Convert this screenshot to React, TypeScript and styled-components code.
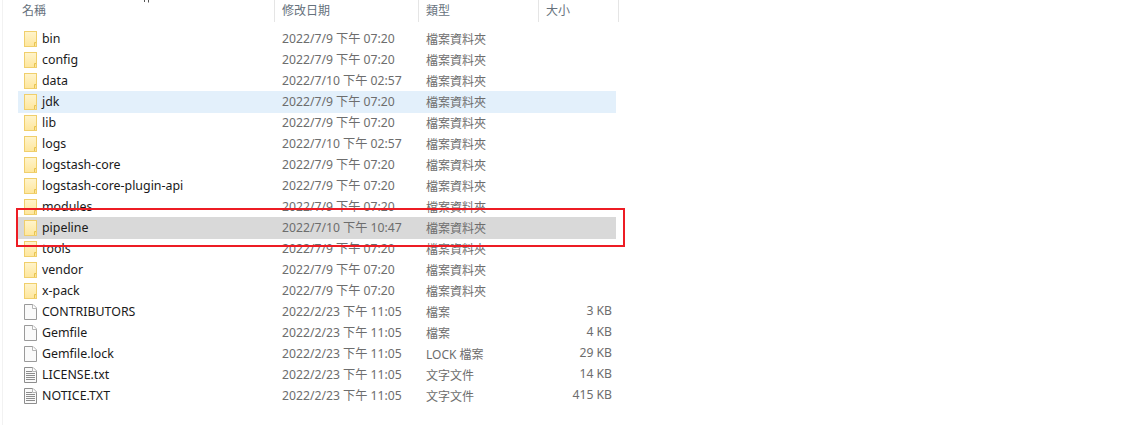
import React from "react";
import styled, { createGlobalStyle } from "styled-components";

const Global = createGlobalStyle`
  html, body { margin: 0; padding: 0; background: #fff; }
  body { font-family: "Noto Sans", "Noto Sans CJK TC", sans-serif; overflow: hidden; }
`;

const Page = styled.div`
  position: relative;
  width: 1127px;
  height: 425px;
  box-sizing: border-box;
  padding-left: 18px;
  overflow: hidden;
  &::before {
    content: "";
    position: absolute;
    left: 2px;
    top: 0;
    bottom: 0;
    width: 1px;
    background: #f2f2f2;
  }
`;

const ClippedMark = styled.svg`
  position: absolute;
  left: 143px;
  top: 0;
  display: block;
`;

const Header = styled.div`
  display: grid;
  grid-template-columns: 257px 144px 120px 80px;
  width: 601px;
  height: 22px;
  margin-bottom: 6px;
`;

const HeaderCell = styled.div<{ $pad: number }>`
  box-sizing: border-box;
  height: 22px;
  padding-left: ${(p) => p.$pad}px;
  border-right: 1px solid #e5e5e5;
  font: 12px/19px "Noto Sans CJK TC", sans-serif;
  color: #66717c;
`;

const List = styled.div`
  width: 598px;
  display: flex;
  flex-direction: column;
`;

const rowBg: Record<string, string> = { none: "transparent", hover: "#e3f0fb", selected: "#d9d9d9" };

const Row = styled.div<{ $state: string }>`
  display: grid;
  grid-template-columns: 257px 144px 120px 77px;
  align-items: center;
  height: 21px;
  background: ${(p) => rowBg[p.$state]};
  box-shadow: ${(p) => (p.$state === "none" ? "none" : `0 1px 0 ${rowBg[p.$state]}`)};
  font-size: 12px;
  color: #6d6d6d;
  white-space: nowrap;
`;

const NameCell = styled.div`
  display: flex;
  align-items: center;
  gap: 5px;
  padding-left: 6px;
  color: #1a1a1a;
  font-size: 12.4px;
`;

const DateCell = styled.div`
  padding: 0 0 2px 7px;
  font-size: 12.2px;
`;

const TypeCell = styled.div`
  padding-left: 7px;
  font-size: 12px;
`;

const SizeCell = styled.div`
  padding: 0 4px 2px 0;
  text-align: right;
  font-size: 12.2px;
`;

const Highlight = styled.div`
  position: absolute;
  left: 16px;
  top: 208px;
  width: 609px;
  height: 39px;
  box-sizing: border-box;
  border: 2px solid #ed1c24;
  pointer-events: none;
`;

const IconSvg = styled.svg`
  flex: none;
  display: block;
`;

const FolderIcon = () => (
  <IconSvg width="13" height="16" viewBox="0 0 13 16">
    <defs>
      <linearGradient id="fg" x1="0" y1="0" x2="0" y2="1">
        <stop offset="0" stopColor="#fff4cc" />
        <stop offset="1" stopColor="#fee69c" />
      </linearGradient>
    </defs>
    <rect x="0.5" y="0.5" width="12" height="15" fill="url(#fg)" stroke="#f0cf6c" />
    <path d="M10.5 15V11.5H12" fill="#f8dc82" stroke="#e8c452" />
  </IconSvg>
);

const FileIcon = () => (
  <IconSvg width="13" height="16" viewBox="0 0 13 16">
    <path d="M.5.5H9L12.5 4V15.5H.5Z" fill="#fafafa" stroke="#9a9a9a" />
    <path d="M8.5.5V4.5H12.5" fill="#fff" stroke="#b5b5b5" />
  </IconSvg>
);

const TextIcon = () => (
  <IconSvg width="13" height="16" viewBox="0 0 13 16">
    <path d="M.5.5H9L12.5 4V15.5H.5Z" fill="#fafafa" stroke="#8e8e8e" />
    <path d="M8.5.5V4.5H12.5" fill="#fff" stroke="#b5b5b5" />
    <path d="M2 4.5H8M2 6.5H11M2 8.5H11M2 10.5H11M2 12.5H11" stroke="#8c8c8c" />
  </IconSvg>
);

type Item = { name: string; date: string; type: string; size?: string; icon: "folder" | "file" | "text"; state?: string };

const D1 = "2022/7/9 下午 07:20";
const D2 = "2022/7/10 下午 02:57";
const D3 = "2022/2/23 下午 11:05";
const F = "檔案資料夾";

const items: Item[] = [
  { name: "bin", date: D1, type: F, icon: "folder" },
  { name: "config", date: D1, type: F, icon: "folder" },
  { name: "data", date: D2, type: F, icon: "folder" },
  { name: "jdk", date: D1, type: F, icon: "folder", state: "hover" },
  { name: "lib", date: D1, type: F, icon: "folder" },
  { name: "logs", date: D2, type: F, icon: "folder" },
  { name: "logstash-core", date: D1, type: F, icon: "folder" },
  { name: "logstash-core-plugin-api", date: D1, type: F, icon: "folder" },
  { name: "modules", date: D1, type: F, icon: "folder" },
  { name: "pipeline", date: "2022/7/10 下午 10:47", type: F, icon: "folder", state: "selected" },
  { name: "tools", date: D1, type: F, icon: "folder" },
  { name: "vendor", date: D1, type: F, icon: "folder" },
  { name: "x-pack", date: D1, type: F, icon: "folder" },
  { name: "CONTRIBUTORS", date: D3, type: "檔案", size: "3 KB", icon: "file" },
  { name: "Gemfile", date: D3, type: "檔案", size: "4 KB", icon: "file" },
  { name: "Gemfile.lock", date: D3, type: "LOCK 檔案", size: "29 KB", icon: "file" },
  { name: "LICENSE.txt", date: D3, type: "文字文件", size: "14 KB", icon: "text" },
  { name: "NOTICE.TXT", date: D3, type: "文字文件", size: "415 KB", icon: "text" },
];

const icons = { folder: FolderIcon, file: FileIcon, text: TextIcon };

export default function App() {
  return (
    <Page>
      <Global />
      <ClippedMark width="8" height="3" viewBox="0 0 8 3">
        <path d="M1.5 0V2M5.5 0V2.5" stroke="#555" />
      </ClippedMark>
      <Header>
        <HeaderCell $pad={4}>名稱</HeaderCell>
        <HeaderCell $pad={7}>修改日期</HeaderCell>
        <HeaderCell $pad={7}>類型</HeaderCell>
        <HeaderCell $pad={7}>大小</HeaderCell>
      </Header>
      <List>
        {items.map((it) => {
          const Icon = icons[it.icon];
          return (
            <Row key={it.name} $state={it.state ?? "none"}>
              <NameCell>
                <Icon />
                {it.name}
              </NameCell>
              <DateCell>{it.date}</DateCell>
              <TypeCell>{it.type}</TypeCell>
              <SizeCell>{it.size}</SizeCell>
            </Row>
          );
        })}
      </List>
      <Highlight />
    </Page>
  );
}
